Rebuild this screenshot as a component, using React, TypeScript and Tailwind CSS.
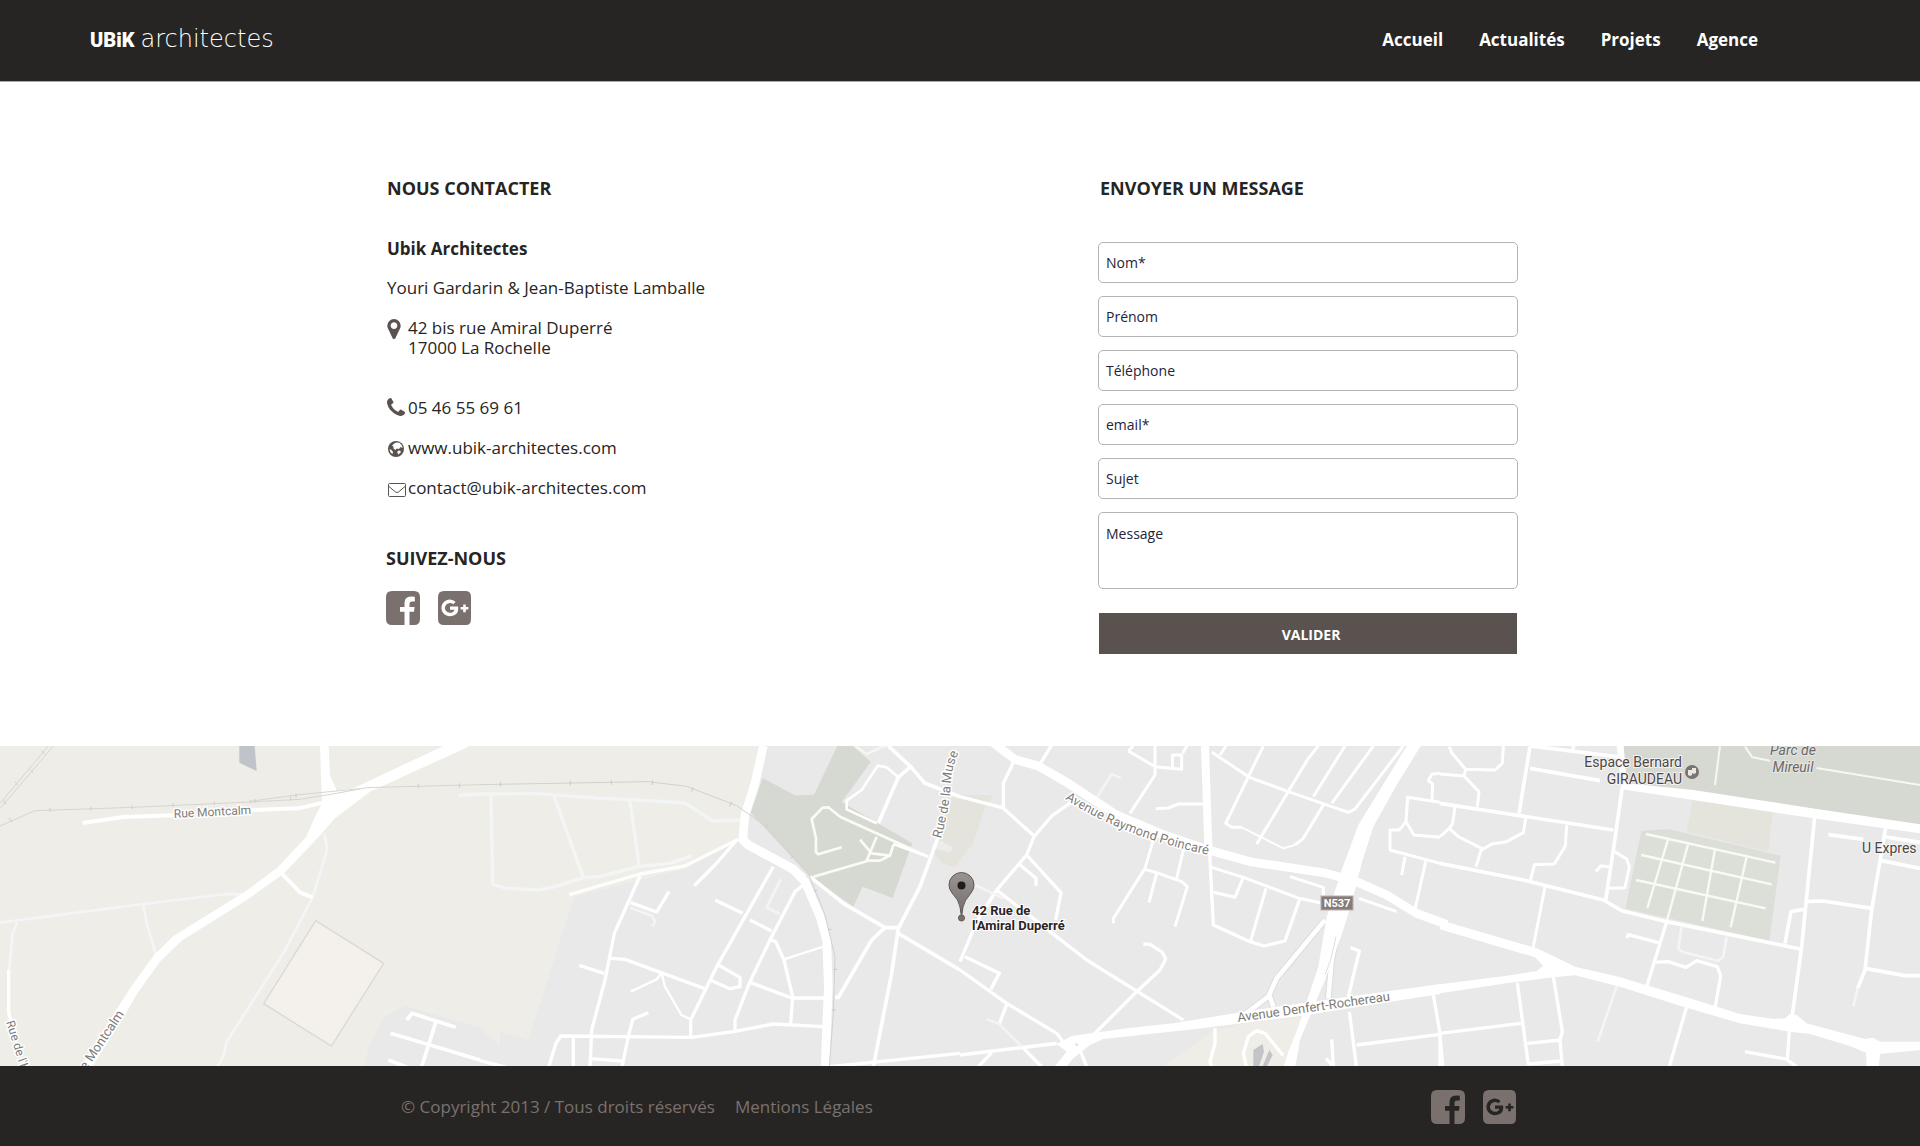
const roadsWest = {
  mid: ["M248 249 L370 231 L520 226 M740 211 L895 205 L985 184", "M845 400 L900 457 L938 472"],
  pale: [
    "M972 280 L982 325 L938 472 L850 640 L680 905 L670 950 L650 985",
    "M0 548 L430 492 L680 462 L735 463",
    "M430 494 L440 550 L468 645",
    "M52 545 L38 580 L26 700",
  ],
};

function Roads({ d, w, c = "#ffffff" }: { d: string; w: number; c?: string }) {
  return <path d={d} strokeWidth={w} stroke={c} fill="none" strokeLinejoin="round" />;
}

function WestSector() {
  return (
    <g>
      <path d="M1095 990 L1105 930 L1150 835 L1215 797 L1440 865 V1000 Z" fill="#e9e9e9" />
      <path d="M718 18 L764 18 L770 93 L718 68 Z" fill="#c0c4ca" />
      <path d="M947 542 L1151 670 L994 918 L791 791 Z" fill="#f4f0ec" stroke="#dcd9d4" strokeWidth="4" />
      {roadsWest.pale.map((d) => (
        <Roads key={d} d={d} w={8} c="#f3f5f6" />
      ))}
      {roadsWest.mid.map((d) => (
        <Roads key={d} d={d} w={12} />
      ))}
      <Roads d="M26 690 L26 820 L36 850" w={10} />
      <path d="M960 18 L986 18 L990 105 L1010 152 L1060 145 L1330 18 L1410 18 L1110 155 L1005 235 L955 292 L850 402 L740 480 L545 602 L480 665 L412 760 L375 825 L270 990 L235 990 L350 808 L395 738 L460 648 L520 588 L735 455 L832 383 L918 292 L945 230 L966 190 Z" fill="#fff" />
      <Roads d="M1220 840 L1236 820 L1367 862 M1172 880 L1440 960 M1308 845 L1265 980 M1165 960 L1230 985" w={11} />
      <Roads d="M1376 168 L1440 162" w={9} c="#f3f5f6" />
      <Roads d="M0 190 L145 18 M0 206 L160 18 M0 258 L105 212 L400 202 L750 186 L900 178 L1010 160 L1100 143 L1440 134 M750 184 L890 165 L1080 146" w={3} c="#d6d5d1" />
      <Roads d="M28 234 L36 247 M150 204 V216 M273 200 V212 M397 196 V208 M519 189 V201 M643 184 V196 M751 179 V191 M765 177 V189 M872 170 V182 M888 161 V173 M1255 131 V145 M1378 130 V144 M10 181 L18 192 M44 125 L54 136 M90 89 L100 99 M124 32 L134 43" w={3} c="#cfcecb" />
    </g>
  );
}

function CentreWestSector() {
  return (
    <g>
      <path d="M0 0 H845 L780 290 L620 385 L282 470 L145 900 L0 860 Z" fill="#eeede8" />
      <path d="M1072 18 H1120 L1172 66 L1085 186 L1297 310 L1238 474 L1148 440 L1120 500 L985 405 L812 218 L848 114 L945 166 L1002 164 Z" fill="#d6d9d2" />
      <path d="M1420 165 H1540 L1514 205 L1480 310 L1425 382 L1385 370 L1360 335 L1375 300 Z" fill="#e4e4dc" />
      <path d="M1355 310 L1385 303 L1418 322 L1410 337 L1355 325 Z" fill="#ececec" />
      <Roads d="M-60 165 L0 162 L170 161 L350 174 L500 181 L615 189 L698 243 L780 240" w={10} c="#f3f4f5" />
      <Roads d="M33 162 L38 433 L80 445 L170 450 L215 443 L310 413 L360 409 L475 380 L570 370 L636 347 M222 168 L310 413 M450 182 L478 380" w={10} c="#f4f5f5" />
      <Roads d="M850 18 L825 130 L795 225 L788 300 L800 312 L935 385 L970 415" w={26} />
      <Roads d="M788 296 L805 315 L940 388 L975 425 L1020 530 L1040 600 L1045 740 L1035 990" w={26} />
      <Roads d="M268 464 L480 402 L615 378 L775 298" w={10} c="#fdfdfb" />
      <Roads d="M770 300 L705 375 L643 437 M480 408 L403 580 L375 720 L335 870 L330 980 M452 488 L530 516 L567 455 M298 676 L372 700 M393 655 L435 658 L672 745 M705 480 L788 520 M880 380 L710 680 L632 840 V890 M810 540 L875 573 M970 435 L945 455 L870 600 L810 725 L765 840 V870 M715 675 L780 712 V740 L750 746 L695 722" w={10} />
      <Roads d="M868 598 L887 605 L912 660 L938 770 L932 850 M810 727 L935 774 H1035 M205 985 L228 910 L242 888 L635 892 L765 874 L880 852 L1030 860 M280 892 V980 M330 956 L425 963 M425 985 L445 890 L458 838 L505 818" w={10} />
      <Roads d="M912 658 L1030 620 M452 755 L530 718 L545 700 L555 740 L604 825 L632 838" w={7} />
      <Roads d="M450 503 L515 527 L525 545 L517 560 M902 418 L860 502 L900 522" w={8} c="#f4f4f4" />
      <Roads d="M990 410 L1090 490 L1215 563 L1255 563 M1255 580 L1440 690 M1215 563 L1175 600 L1075 772 H1065 M1375 290 L1320 440 L1255 565 L1235 700 L1180 980 M1225 18 L1292 80 L1335 130 L1440 170 M1292 80 L1255 112 L1195 250" w={11} />
      <Roads d="M1000 410 L1165 362 L1200 362 L1230 347 L1240 315 M1345 350 L1080 230 L1045 202 L1028 203 L995 237 L1008 295 L1008 337 L1015 343 L1085 322 M1190 290 L1160 362 M1140 299 L1175 340 L1230 347" w={8} c="#fbfbf6" />
      <Roads d="M1255 112 L1220 82 L1193 77 L1145 150 L1100 182 V208 L1190 250 M1345 350 L1240 312" w={8} />
      <Roads d="M1125 18 L1160 42 L1220 15" w={8} c="#f5f5f5" />
      <Roads d="M1050 980 L1440 940 M0 962 L80 982" w={10} />
      <Roads d="M0 134 L505 125 L620 139 L770 197 L860 260 L985 400 L1035 525 L1065 650 L1060 820 L1048 980" w={3} c="#d2d1ce" />
      <Roads d="M61 126 V140 M271 122 V136 M394 120 V134 M517 121 V135 M640 142 L634 155 M755 186 L749 199 M855 262 L864 254 M932 355 L941 347 M1002 454 L1012 450 M1044 568 H1054 M1060 688 H1072 M1056 810 H1067" w={3} c="#c9c9c6" />
    </g>
  );
}

function CentreEastSector() {
  return (
    <g>
      <path d="M0 165 L75 190 L48 275 L0 360 Z" fill="#e4e4dc" />
      <path d="M1358 18 H1395 L1308 130 Z" fill="#eceae4" />
      <path d="M610 980 L755 875 L860 850 L1030 830 L990 980 Z" fill="#eeede8" />
      <Roads d="M95 5 L165 58 L235 78 L325 130 L470 225 L600 280 L745 330 L870 365 L1100 400 L1190 425 L1280 465 L1370 520 L1460 553" w={26} />
      <Roads d="M735 18 L745 320" w={24} />
      <Roads d="M748 320 L760 555 L870 605 L912 618 L975 603 L1018 480" w={10} />
      <Roads d="M1095 540 L950 715 L925 770 L845 830 M1135 560 L1115 660 L1105 775 M928 765 L940 800" w={20} c="#ddddd7" />
      <path d="M1340 18 H1382 L1310 135 L1240 260 L1205 370 L1180 470 L1150 570 L1095 720 L1045 840 L1020 900 L1005 985 H970 L985 935 L1015 860 L1075 680 L1100 530 L1145 390 L1195 255 Z" fill="#fff" />
      <Roads d="M1095 540 L950 715 L925 770 L845 830 M1135 560 L1115 660 L1105 775 M928 765 L940 800" w={14} />
      <Roads d="M1128 590 L1112 660 L1095 705" w={3} c="#deddd9" />
      <Roads d="M160 68 L130 130 V205 L225 290 M0 170 L135 205 M240 72 L275 15 M350 175 L275 228 L222 290 L200 345 L110 450 L50 545 L0 665 M200 345 L303 458 L287 540 M180 375 L228 415 V437 M110 450 L290 590 L380 660 L670 840" w={10} />
      <Roads d="M412 170 L455 102 L482 114 M45 435 L130 475" w={8} c="#f4f4f4" />
      <Roads d="M585 18 V105 L510 220 M505 33 L585 80 L665 88 V45 H637 V85 M505 33 L520 18 M668 40 L682 15 M587 206 L625 204 L655 192 H735 M583 290 L555 385 L460 535 V550 M555 388 L590 398 L665 425 L682 440 L645 560 M590 400 L567 488 M670 330 L650 415" w={9} />
      <Roads d="M755 36 L870 113 L985 155 L1165 217 L1185 207 L1330 18 M910 18 L797 250 L815 262 H845 M1075 18 L1045 55 L890 312 M1155 18 L1060 170 M1240 18 L1115 190 M1090 195 L1030 295 L1005 315 M780 45 L798 18" w={9} />
      <Roads d="M845 262 L970 325 L1005 315" w={6} />
      <Roads d="M755 382 L850 412 L1018 475 L1080 488 M850 412 L825 472 L760 457 M918 445 L872 603 M990 410 L1090 442 V470 M1197 475 L1310 515" w={9} />
      <Roads d="M0 945 L290 910" w={11} />
      <path d="M640 850 L870 812 L1440 732 V762 L1020 828 L700 868 L430 897 L390 915 L340 955 L310 990 H275 L320 935 L290 912 L335 888 L500 865 Z" fill="#fff" />
      <Roads d="M15 650 L118 700 L92 748 M0 690 L140 790 L290 880 L320 920 M140 793 L118 852 M360 930 L380 980 M50 985 L95 938 M185 920 L250 985 M400 885 L530 755 L600 690 L617 657 L607 637 L570 613 L550 612" w={10} />
      <Roads d="M80 838 L118 852 L185 920" w={8} c="#f3f3f3" />
      <Roads d="M765 865 V910 L750 965 L757 985 M860 985 L850 940 L865 890 L890 872 L915 880 L970 947 M1172 623 L1198 633 L1165 770 M1168 815 L1190 985 M1190 915 L1440 883 M1115 898 L1120 980 L1098 955 M1420 765 L1440 880 V985" w={10} />
      <path d="M880 985 V930 L908 912 L912 935 L895 985 Z M928 930 L938 945 L918 985 H905 Z" fill="#c2c4c8" />
      <circle cx="350" cy="914" r="4" fill="#ddd" />
      <Roads d="M1440 100 L1415 103 L1405 122 L1418 132 L1416 182 M1440 187 L1343 172 L1338 245 L1318 270 H1290 V330 L1440 370 M1338 245 L1362 285 L1440 292 M1335 350 L1325 405 M1397 365 L1365 508" w={9} />
    </g>
  );
}

function EastSector() {
  return (
    <g>
      <path d="M551 18 H1440 V255 L1130 208 L560 132 Z" fill="#d6d9d2" />
      <path d="M757 180 L998 214 L985 335 L740 275 Z" fill="#e4e4dd" />
      <path d="M604 273 L685 267 L1022 347 L988 602 L556 506 Z" fill="#dcdfd8" />
      <Roads d="M840 18 L825 135 M915 20 L937 52 L990 62 M1130 84 L1440 135" w={6} c="#f6f7f2" />
      <Roads d="M618 282 L1006 368 M604 345 L995 433 M588 420 L977 505 M685 295 L622 504 M745 310 L680 545 M825 328 L787 543 M920 350 L872 562" w={7} c="#fafaf5" />
      <path d="M530 18 H551 L560 130 L760 150 L1130 207 L1440 253 V280 L1120 235 L760 180 L545 148 Z" fill="#fff" />
      <Roads d="M0 190 L520 270 M0 370 L250 420 L490 480 L545 512 L680 545 L1080 627 M547 140 L520 330 L497 480 M270 20 L237 220 M270 85 L480 122 M270 18 L550 52 M400 28 V18 M1125 220 L1085 620 L1055 840 M1337 262 L1295 510 L1275 690 L1253 745 M1095 485 L1150 483 L1295 505 M1090 508 L1053 515 L1035 610 M1275 685 L1395 707 H1440 M1165 284 L1270 298 M1325 362 L1440 385 M1330 290 L1440 307" w={11} />
      <Roads d="M28 20 L35 38 L77 88 L165 90 L187 70 L190 18 M77 88 L72 108 L117 155 L112 200 M0 102 L72 108 M45 200 L38 250 L28 265 L0 290 M28 265 L55 290 L125 325 L108 380 M125 330 L155 312 L200 305 L250 278 L258 230 M380 255 L376 318 L343 372 L283 374 L272 420 M520 333 L560 357 L568 380 L555 443 L505 445 M507 380 L482 378 L468 395 M315 440 L278 630" w={9} />
      <Roads d="M680 545 L620 740 M655 608 L565 584 L560 594 M640 667 L685 665 L738 682 L770 662 L832 680 L842 708 L825 805 M740 800 L688 980 M232 728 L265 975 M340 710 L367 875 L360 900 L367 980 M262 910 L362 900 M0 880 L242 850 M0 885 L8 980 M265 972 L362 963 M1048 870 L1042 960 L1070 980 M915 935 L1042 958" w={10} />
      <Roads d="M725 560 L715 625 L725 635 L835 663 L850 650 L860 590 M530 738 L473 905 M1253 745 L1240 800" w={8} c="#f5f5f5" />
      <path d="M0 540 L290 625 L360 658 L405 680 L535 710 L750 775 L900 822 L1000 837 L1035 835 L1050 822 L1070 825 L1100 850 L1275 897 L1300 893 L1320 905 H1440 V930 L1320 942 L1316 990 H1280 L1278 938 L1230 918 L1110 882 L1050 875 L900 850 L730 800 L540 740 L405 706 L340 712 L200 730 L0 760 V733 L200 707 L290 693 L310 678 L285 652 L0 568 Z" fill="#fff" />
    </g>
  );
}

function CityMap() {
  return (
    <svg
      viewBox="0 0 1920 320"
      preserveAspectRatio="xMidYMid slice"
      className="block h-80 w-full bg-[#e9e9e9] font-[Roboto,sans-serif]"
      role="img"
      aria-label="Plan d'accès"
    >
      <defs>
        <linearGradient id="pin" x1="0" y1="0" x2="0" y2="1">
          <stop offset="0" stopColor="#9a9593" />
          <stop offset="1" stopColor="#6f6a68" />
        </linearGradient>
        <path id="poincare" d="M1065 53 Q1125 93 1220 111" />
        <path id="muse" d="M941 93 Q950 60 951 35 Q952 18 962 0" />
        <path id="hopital" d="M6 276 L15 305 L28 345" />
      </defs>
      <rect width="1920" height="320" fill="#e9e9e9" />
      <path d="M0 0 H500 V300 L480 282 L405 260 L383 272 L368 304 L365 320 H0 Z" fill="#eeede8" />
      <g transform="translate(480 -6) scale(.333333)">
        <CentreWestSector />
      </g>
      <g transform="translate(0 -6) scale(.333333)">
        <WestSector />
      </g>
      <g transform="translate(960 -6) scale(.333333)">
        <CentreEastSector />
      </g>
      <g transform="translate(1440 -6) scale(.333333)">
        <EastSector />
      </g>

      <g fill="#7d7b7a" stroke="#ffffff" strokeWidth="3" paintOrder="stroke" strokeLinejoin="round">
        <text fontSize="12" transform="translate(174 72) rotate(-3)">Rue Montcalm</text>
        <text fontSize="13" transform="translate(86 325) rotate(-56)">e Montcalm</text>
        <text fontSize="12">
          <textPath href="#hopital">Rue de l'H</textPath>
        </text>
        <text fontSize="13">
          <textPath href="#muse">Rue de la Muse</textPath>
        </text>
        <text fontSize="13">
          <textPath href="#poincare">Avenue Raymond Poincaré</textPath>
        </text>
        <text fontSize="13" transform="translate(1238 276) rotate(-8)">Avenue Denfert-Rochereau</text>
      </g>

      <g fill="#4d4644" stroke="#f4f4f4" strokeWidth="2" paintOrder="stroke" fontSize="14">
        <text x="1682" y="21" textAnchor="end">Espace Bernard</text>
        <text x="1682" y="38" textAnchor="end">GIRAUDEAU</text>
        <text x="1862" y="107">U Expres</text>
      </g>
      <g fill="#6c6867" stroke="#e4e6e1" strokeWidth="2" paintOrder="stroke" fontSize="14" fontStyle="italic" textAnchor="middle">
        <text x="1793" y="9">Parc de</text>
        <text x="1793" y="26">Mireuil</text>
      </g>
      <circle cx="1692" cy="26" r="7" fill="#7b7472" />
      <path d="M1688 24 h4 v5 l-2 1 l-2 -1 Z M1692 22 h4 v5 l-2 1 l-2 -1 Z" fill="#e9e6e4" />

      <rect x="1321" y="150" width="32" height="14" fill="#857c79" stroke="#b5b0ae" />
      <text x="1337" y="161" textAnchor="middle" fontSize="11" fontWeight="700" fill="#fff">
        N537
      </text>

      <path d="M961.500 171 L960 161 Q959 154 952 147 Q949 143 949 139 A12.500 12.500 0 0 1 974 139 Q974 143 971 147 Q964 155 963 161 Z" fill="url(#pin)" stroke="#5e5856" />
      <circle cx="961.500" cy="139.500" r="4" fill="#1e1b1a" />
      <circle cx="961.500" cy="172" r="3" fill="#77706e" stroke="#5e5856" />
      <g fill="#2b2423" stroke="#ffffff" strokeWidth="2" paintOrder="stroke" fontSize="13" fontWeight="700">
        <text x="972" y="169">42 Rue de</text>
        <text x="972" y="184">l'Amiral Duperré</text>
      </g>
    </svg>
  );
}

function PinIcon() {
  return (
    <svg viewBox="384 128 1024 1536" className="mt-px h-5 w-3.5 fill-[#59524f]" aria-hidden="true">
      <path d="M1152 640q0-106-75-181t-181-75-181 75-75 181 75 181 181 75 181-75 75-181zm256 0q0 109-33 179l-364 774q-16 33-47.500 52t-67.500 19-67.500-19-46.500-52l-365-774q-33-70-33-179 0-212 150-362t362-150 362 150 150 362z" />
    </svg>
  );
}

function PhoneIcon() {
  return (
    <svg viewBox="192 128 1408 1408" className="size-[18px] fill-[#59524f]" aria-hidden="true">
      <path d="M1600 1240q0 27-10 70.500t-21 68.500q-21 50-122 106-94 51-186 51-27 0-53-3.500t-57.500-12.500-47-14.500-55.500-20.500-49-18q-98-35-175-83-127-79-264-216t-216-264q-48-77-83-175-3-9-18-49t-20.500-55.500-14.500-47-12.500-57.500-3.500-53q0-92 51-186 56-101 106-122 25-11 68.500-21t70.500-10q14 0 21 3 18 6 53 76 11 19 30 54t35 63.500 31 53.500q3 4 17.500 25t21.500 35.500 7 28.500q0 20-28.500 50t-62 55-62 53-28.500 46q0 9 5 22.500t8.500 20.500 14 24 11.500 19q76 137 174 235t235 174q2 1 19 11.500t24 14 20.500 8.500 22.500 5q18 0 46-28.500t53-62 55-62 50-28.500q14 0 28.500 7t35.500 21.500 25 17.500q25 15 53.500 31t63.500 35 54 30q70 35 76 53 3 7 3 21z" />
    </svg>
  );
}

function GlobeIcon() {
  return (
    <svg viewBox="0 0 16 16" className="ml-px mt-[3px] size-4" aria-hidden="true">
      <circle cx="8" cy="8" r="8" fill="#59524f" />
      <path
        d="M8 1.500 L11.500 1.800 L14 4.500 L14.500 7 L12.500 6 L11 8 L8.800 7.500 L7.500 9 L5.500 7.500 L5.500 5.500 L4 5 L5.500 3 Z M9.500 10 L12 9.500 L13 11 L10.500 13.500 L9.500 12 Z M1.500 8 L3.500 9 L5 11 L4.500 13 L2.500 11.500 Z"
        fill="#fff"
      />
    </svg>
  );
}

function MailIcon() {
  return (
    <svg viewBox="0 0 18 14" className="ml-px mt-[5px] h-3.5 w-[18px] fill-none stroke-[#59524f]" aria-hidden="true">
      <rect x=".5" y=".5" width="17" height="13" rx="1" />
      <path d="M1 3.500 L7.500 9 Q9 10 10.500 9 L17 3.500" />
    </svg>
  );
}

function GooglePlusIcon() {
  return (
    <svg viewBox="0 0 34 34" className="size-[34px]" aria-hidden="true">
      <path
        fillRule="evenodd"
        fill="currentColor"
        d="M6 0 H28 Q33 0 33 6 V28 Q33 34 28 34 H6 Q0 34 0 28 V6 Q0 0 6 0 Z M12 15.500 V18.700 H16.500 Q15.600 21.800 12 21.800 A4.900 4.900 0 1 1 15.200 13.300 L17.600 11 A8.300 8.300 0 1 0 12 25.200 Q20.300 25 20.300 17 L20.100 15.500 Z M25.200 13.500 V16 H22.600 V18.600 H25.200 V21.200 H27.800 V18.600 H30.400 V16 H27.800 V13.500 Z"
      />
    </svg>
  );
}

function SocialLinks() {
  return (
    <div className="flex gap-[18px] text-[#7a716e]">
      <a href="#facebook" aria-label="Facebook">
        <svg viewBox="0 0 34 34" className="size-[34px]" aria-hidden="true">
          <path
            fill="currentColor"
            d="M6 0 H28 Q34 0 34 6 V28 Q34 34 28 34 H23.500 V20.800 H28 L28.600 16 H23.500 V12.800 Q23.500 10.500 26 10.500 H28.800 V5.800 Q27.500 5.500 25 5.500 Q18.500 5.500 18.500 12 V16 H14 V20.800 H18.500 V34 H6 Q0 34 0 28 V6 Q0 0 6 0 Z"
          />
        </svg>
      </a>
      <a href="#google-plus" aria-label="Google Plus">
        <GooglePlusIcon />
      </a>
    </div>
  );
}

const fields = [
  { name: "nom", label: "Nom*", type: "text" },
  { name: "prenom", label: "Prénom", type: "text" },
  { name: "telephone", label: "Téléphone", type: "tel" },
  { name: "email", label: "email*", type: "email" },
  { name: "sujet", label: "Sujet", type: "text" },
];

const navLinks = ["Accueil", "Actualités", "Projets", "Agence"];

export default function App() {
  return (
    <div className="bg-white font-['Open_Sans',sans-serif] text-[17px] leading-5 text-[#262523]">
      <header className="flex h-[82px] items-center justify-between border-b border-[#a9a8a7] bg-[#262523] pr-[162px] pb-0.5 pl-[90px] text-white">
        <a href="#accueil" className="flex items-baseline gap-1.5" aria-label="UBiK architectes">
          <span className="font-[Roboto,sans-serif] text-[20px] font-black">UBiK</span>
          <span className="font-['DejaVu_Sans',sans-serif] text-[24px] font-extralight">architectes</span>
        </a>
        <nav className="flex gap-9 font-bold">
          {navLinks.map((link) => (
            <a key={link} href={`#${link.toLowerCase()}`}>
              {link}
            </a>
          ))}
        </nav>
      </header>

      <main>
        <div className="mx-auto flex max-w-[1148px] justify-between pt-24 pr-4 pb-[92px]">
          <section>
            <div className="pl-px">
              <h1 className="text-[18px] font-bold">NOUS CONTACTER</h1>
              <p className="mt-[41px] font-bold">Ubik Architectes</p>
              <p className="mt-[19px]">Youri Gardarin &amp; Jean-Baptiste Lamballe</p>
              <address className="mt-5 not-italic">
                <div className="grid grid-cols-[21px_1fr]">
                  <PinIcon />
                  <p>
                    42 bis rue Amiral Duperré
                    <br />
                    17000 La Rochelle
                  </p>
                </div>
                <div className="mt-10 grid grid-cols-[21px_1fr]">
                  <PhoneIcon />
                  <a href="tel:0546556961">05 46 55 69 61</a>
                </div>
                <div className="mt-5 grid grid-cols-[21px_1fr]">
                  <GlobeIcon />
                  <a href="#site">www.ubik-architectes.com</a>
                </div>
                <div className="mt-5 grid grid-cols-[21px_1fr]">
                  <MailIcon />
                  <a href="mailto:contact@ubik-architectes.com">contact@ubik-architectes.com</a>
                </div>
              </address>
            </div>
            <h2 className="mt-[50px] mb-[23px] text-[18px] font-bold">SUIVEZ-NOUS</h2>
            <SocialLinks />
          </section>

          <section className="w-[420px]">
            <h2 className="pl-0.5 text-[18px] font-bold">ENVOYER UN MESSAGE</h2>
            <form className="mt-11 flex flex-col gap-[13px] text-[14px]">
              {fields.map((field) => (
                <input
                  key={field.name}
                  name={field.name}
                  type={field.type}
                  aria-label={field.label}
                  placeholder={field.label}
                  className="h-[41px] rounded-[5px] border border-[#b4b4b4] px-[7px] placeholder:text-[#23233a]"
                />
              ))}
              <textarea
                name="message"
                aria-label="Message"
                placeholder="Message"
                className="h-[77px] resize-none rounded-[5px] border border-[#b4b4b4] px-[7px] py-[11px] placeholder:text-[#23233a]"
              />
              <button type="button" className="mx-px mt-[11px] h-[41px] bg-[#59524f] pt-0.5 pl-1.5 font-bold text-white">
                VALIDER
              </button>
            </form>
          </section>
        </div>
        <CityMap />
      </main>

      <footer className="bg-[#262523] text-[#7a716e]">
        <div className="mx-auto flex h-20 max-w-[1148px] items-center justify-between pt-0.5 pr-[17px] pl-[15px]">
          <div className="flex gap-5">
            <p>© Copyright 2013 / Tous droits réservés</p>
            <a href="#mentions">Mentions Légales</a>
          </div>
          <SocialLinks />
        </div>
      </footer>
    </div>
  );
}
